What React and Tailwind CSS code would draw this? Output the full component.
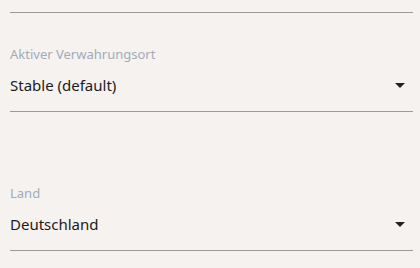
export default function App() {
  const fields = [
    { label: "Aktiver Verwahrungsort", value: "Stable (default)", top: "pt-[32px]" },
    { label: "Land", value: "Deutschland", top: "pt-[72px]" },
  ];

  return (
    <div className="h-[268px] w-[420px] bg-[#f5f2ef] pl-[10px] pr-[7px] font-['Noto_Sans',sans-serif]">
      <div className="h-[13px] border-b border-[#9c9a98]" />

      {fields.map((f) => (
        <div key={f.label} className={`${f.top} border-b border-[#9c9a98]`}>
          <div className="text-[13px] leading-[18px] text-[#a3abbb]">{f.label}</div>
          <div className="mt-[11px] flex items-center justify-between pb-[15px] pr-[8px]">
            <span className="text-[15px] leading-[22px] text-[#1b1b1b]">{f.value}</span>
            <span className="h-0 w-0 border-x-[5px] border-t-[5px] border-x-transparent border-t-[#222]" />
          </div>
        </div>
      ))}
    </div>
  );
}
